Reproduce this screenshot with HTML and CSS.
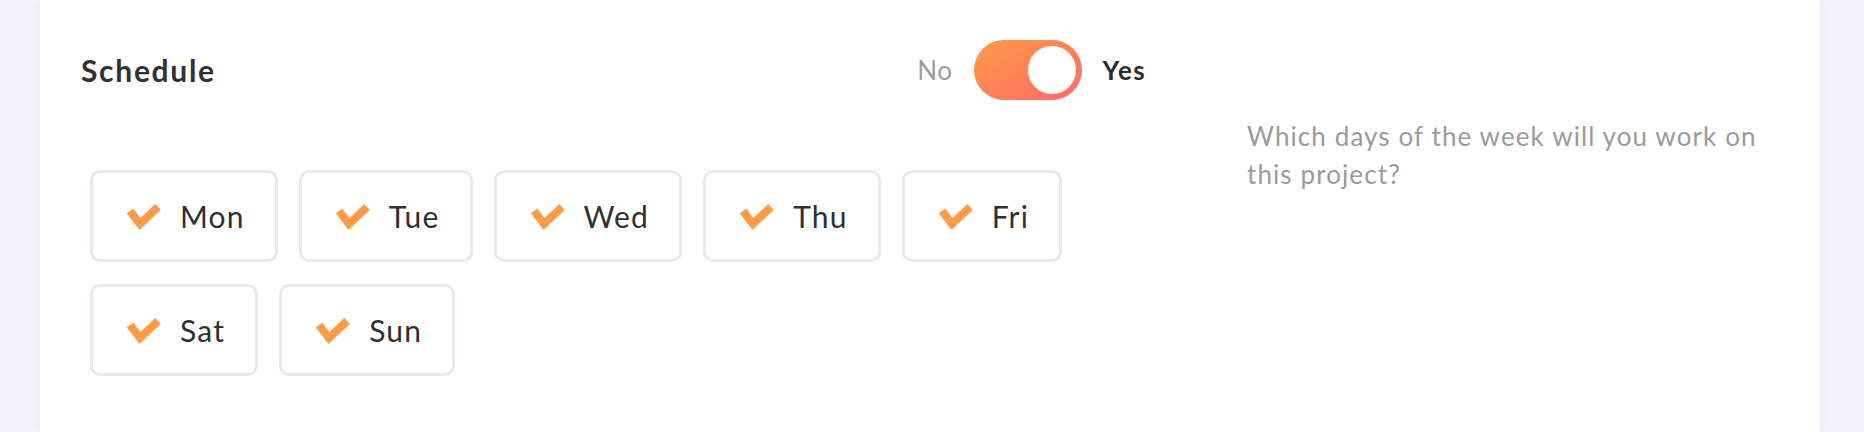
FILE: index.html
```html
<!DOCTYPE html>
<html lang="en">
<head>
<meta charset="utf-8">
<title>Schedule</title>
<link rel="stylesheet" href="styles.css">
</head>
<body>
<div class="page">
  <section class="card">
    <div class="main">
      <div class="header">
        <h2 class="title">Schedule</h2>
        <div class="toggle-group">
          <span class="opt opt-off">No</span>
          <span class="switch on"><span class="knob"></span></span>
          <span class="opt opt-on">Yes</span>
        </div>
      </div>
      <div class="days">
        <label class="day"><svg class="check" viewBox="0 0 35 27"><polyline points="3,8 13,21 31,4"/></svg><span>Mon</span></label>
        <label class="day"><svg class="check" viewBox="0 0 35 27"><polyline points="3,8 13,21 31,4"/></svg><span>Tue</span></label>
        <label class="day"><svg class="check" viewBox="0 0 35 27"><polyline points="3,8 13,21 31,4"/></svg><span>Wed</span></label>
        <label class="day"><svg class="check" viewBox="0 0 35 27"><polyline points="3,8 13,21 31,4"/></svg><span>Thu</span></label>
        <label class="day"><svg class="check" viewBox="0 0 35 27"><polyline points="3,8 13,21 31,4"/></svg><span>Fri</span></label>
        <label class="day"><svg class="check" viewBox="0 0 35 27"><polyline points="3,8 13,21 31,4"/></svg><span>Sat</span></label>
        <label class="day"><svg class="check" viewBox="0 0 35 27"><polyline points="3,8 13,21 31,4"/></svg><span>Sun</span></label>
      </div>
    </div>
    <p class="hint">Which days of the week will you work on this project?</p>
  </section>
</div>
</body>
</html>
```
FILE: styles.css
```css
* { box-sizing: border-box; }
html, body {
  margin: 0;
  height: 100%;
}
body {
  background: #f4f5f9;
  font-family: Lato, "Open Sans", sans-serif;
  color: #303030;
  overflow: hidden;
}
.page {
  height: 100vh;
  padding: 0 44px 0 40px;
}
.card {
  height: 100%;
  background: #fff;
  box-shadow: 0 0 9px rgba(40, 40, 90, 0.06);
  padding: 40px 41px 0 41px;
  display: flex;
  gap: 101px;
}
.main {
  flex: 0 0 1065px;
}
.header {
  height: 60px;
  display: flex;
  align-items: center;
  justify-content: space-between;
}
.title {
  margin: 0;
  font-size: 30px;
  font-weight: 700;
  color: #323232;
  letter-spacing: 1.7px;
}
.toggle-group {
  display: flex;
  align-items: center;
  gap: 21px;
}
.opt {
  font-size: 26px;
  letter-spacing: 0.6px;
}
.opt-off {
  color: #9c9c9c;
}
.opt-on {
  font-weight: 700;
  color: #2c2c2c;
  letter-spacing: 1.4px;
}
.switch {
  width: 108px;
  height: 60px;
  border-radius: 30px;
  background: linear-gradient(150deg, #ff9a45 0%, #ff8257 50%, #ff6b6c 100%);
  display: flex;
  align-items: center;
  justify-content: flex-end;
  padding: 0 6px;
}
.knob {
  width: 48px;
  height: 48px;
  border-radius: 50%;
  background: #fff;
}
.days {
  margin: 70px 0 0 9px;
  display: flex;
  flex-wrap: wrap;
  column-gap: 21px;
  row-gap: 22px;
}
.day {
  height: 92px;
  border: 3px solid #e9eaef;
  border-radius: 10px;
  padding: 0 30px 0 34px;
  display: flex;
  align-items: center;
  gap: 18px;
  font-size: 30px;
  letter-spacing: 1.2px;
  color: #303030;
}
.check {
  width: 35px;
  height: 27px;
  flex: 0 0 auto;
}
.check polyline {
  fill: none;
  stroke: #ff9b45;
  stroke-width: 8;
  stroke-linecap: butt;
  stroke-linejoin: miter;
}
.hint {
  margin: 77px 0 0;
  flex: 1;
  font-size: 26px;
  line-height: 38px;
  font-weight: 400;
  letter-spacing: 1.1px;
  color: #9b9b9b;
}
```
